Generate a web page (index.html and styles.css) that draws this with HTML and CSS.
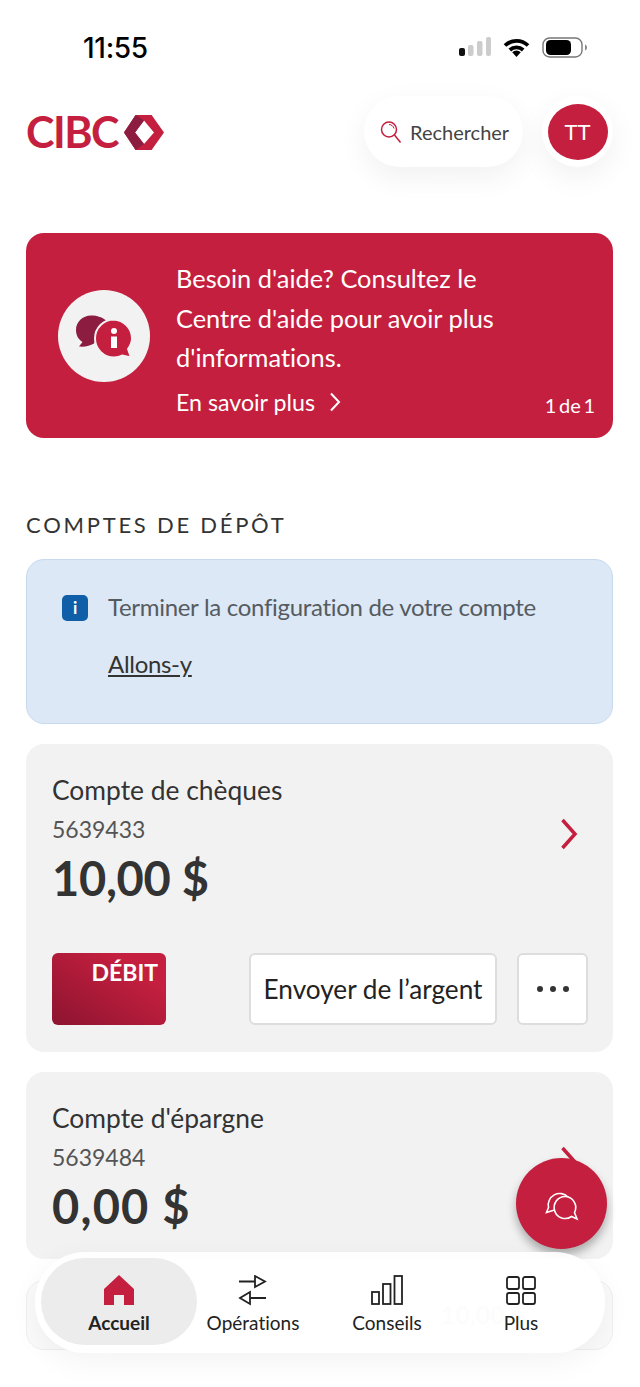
FILE: index.html
```html
<!DOCTYPE html>
<html lang="fr">
<head>
<meta charset="utf-8">
<title>CIBC - Accueil</title>
<link rel="stylesheet" href="styles.css">
</head>
<body>
<div class="screen">
    <!-- barre d'etat -->
    <div class="status">
        <span class="time">11:55</span>
        <div class="statusIcons">
            <svg width="32" height="20" viewBox="0 0 32 20"><rect x="0" y="11" width="6" height="8" rx="2" fill="#111"/><rect x="9" y="8" width="5.500" height="11" rx="2" fill="#ccc"/><rect x="18" y="4" width="5.500" height="15" rx="2" fill="#ccc"/><rect x="27" y="0" width="5" height="19" rx="2" fill="#ccc"/></svg>
            <svg width="27" height="20" viewBox="0 0 27 20"><path d="M2 8.500a16.500 16.500 0 0 1 23 0" fill="none" stroke="#000" stroke-width="3.800"/><path d="M6.800 13a10 10 0 0 1 13.400 0" fill="none" stroke="#000" stroke-width="3.800"/><path d="M13.500 20l-4.300-4.700a6.300 6.300 0 0 1 8.600 0z" fill="#000"/></svg>
            <svg width="45" height="21" viewBox="0 0 45 21"><rect x="1" y="1" width="39" height="19" rx="6.500" fill="none" stroke="#777" stroke-width="1.400"/><rect x="4" y="3" width="25" height="15" rx="4.500" fill="#000"/><path d="M43 7.500c1.300.5 2 1.700 2 3s-.7 2.500-2 3z" fill="#888"/></svg>
        </div>
    </div>

    <!-- entete -->
    <header class="header">
        <div class="logo">
            <span class="logoText">CIBC</span>
            <svg width="40" height="35" viewBox="0 0 40 35"><path d="M0 17.500L11.600 0h16L40 17.500 27.600 35h-16zM20 5.500l-9 12 9 11.500 10-11.500z" fill="#c41f3e" fill-rule="evenodd"/><path d="M0 17.500L11.600 0 20 5.500l-9 12L20 29l-8.400 6z" fill="#8c1d40"/></svg>
        </div>
        <div class="headerRight">
            <div class="search">
                <svg width="22" height="24" viewBox="0 0 22 24"><circle cx="9" cy="9.500" r="7.500" fill="none" stroke="#c41f3e" stroke-width="1.500"/><path d="M14.500 15l6 7.500" fill="none" stroke="#c41f3e" stroke-width="1.500"/><path d="M9 4.500c2.500 0 4.500 1.800 5 4" fill="none" stroke="#c41f3e" stroke-width="1"/></svg>
                <span>Rechercher</span>
            </div>
            <div class="avatarRing"><div class="avatar">TT</div></div>
        </div>
    </header>

    <!-- bandeau aide -->
    <section class="banner">
        <div class="bannerIcon">
            <svg width="92" height="92" viewBox="0 0 92 92"><path d="M33 25.500c-8.500 0-15 6.500-15 14.500 0 5.500 2.500 9.500 6.500 12l-3.500 4.500c6 .5 11-.5 15-3l12-23c-3-3-9-5-15-5z" fill="#8c1d40"/><path d="M56 29.500a19 19 0 0 0-19 19c0 10.500 8.500 19 19 19 3 0 6-.7 8.500-2l8.500 2-3-8.500c2.500-3.300 4-6.300 4-10.500a19 19 0 0 0-18.500-19z" fill="#c41f3e" stroke="#f2f2f2" stroke-width="2"/><circle cx="56" cy="41" r="3" fill="#fff"/><path d="M53 46.500h6V58h-6z" fill="#fff"/></svg>
        </div>
        <div class="bannerBody">
            <p class="bannerText">Besoin d'aide? Consultez le<br>Centre d'aide pour avoir plus<br>d'informations.</p>
            <div class="bannerLink">
                <span>En savoir plus</span>
                <svg width="12" height="20" viewBox="0 0 12 20"><path d="M2 1.500L10 10l-8 8.500" fill="none" stroke="#fff" stroke-width="2"/></svg>
            </div>
        </div>
        <span class="bannerCount">1 de 1</span>
    </section>

    <h2 class="sectionTitle">COMPTES DE DÉPÔT</h2>

    <!-- message configuration -->
    <section class="notice">
        <div class="noticeRow">
            <span class="noticeIcon">i</span>
            <span class="noticeText">Terminer la configuration de votre compte</span>
        </div>
        <a class="noticeLink">Allons-y</a>
    </section>

    <!-- comptes -->
    <section class="card">
        <div class="cardTop">
            <div>
                <div class="cardName">Compte de chèques</div>
                <div class="cardNum">5639433</div>
                <div class="cardAmount">10,00 $</div>
            </div>
            <svg class="chevron" width="20" height="32" viewBox="0 0 20 32"><path d="M3.500 2L16 16 3.500 30" fill="none" stroke="#c41f3e" stroke-width="3.500"/></svg>
        </div>
        <div class="cardActions">
            <div class="debit">DÉBIT</div>
            <div class="btn btnSend">Envoyer de l’argent</div>
            <div class="btn btnMore"><i></i><i></i><i></i></div>
        </div>
    </section>

    <section class="card cardShort">
        <div class="cardTop">
            <div>
                <div class="cardName">Compte d'épargne</div>
                <div class="cardNum">5639484</div>
                <div class="cardAmount amountWide">0,00 $</div>
            </div>
            <svg class="chevron" width="20" height="32" viewBox="0 0 20 32"><path d="M3.500 2L16 16 3.500 30" fill="none" stroke="#c41f3e" stroke-width="3.500"/></svg>
        </div>
    </section>

    <section class="card cardGhost">
        <div class="ghostAmount">10,00 $</div>
    </section>

    <!-- bouton clavardage -->
    <div class="fab">
        <svg width="65" height="65" viewBox="-1.500 .5 65 65"><path d="M37.500 26.500A11.500 11.500 0 0 0 18 37l-2 5 8-2.500" fill="none" stroke="#fff" stroke-width="1.600"/><path d="M35 26a11 11 0 1 0 6 20l5.500 2.500L44 42a11 11 0 0 0-9-16z" fill="#c41f3e" stroke="#fff" stroke-width="1.600"/></svg>
    </div>

    <!-- navigation -->
    <nav class="nav">
        <div class="navItem navActive">
            <svg width="32" height="32" viewBox="0 0 32 32"><path d="M16 0L1 14v16h10V20h10v10h10V14z" fill="#c41f3e"/></svg>
            <span>Accueil</span>
        </div>
        <div class="navItem navFirst">
            <svg width="32" height="32" viewBox="0 0 32 32"><path d="M2 6.500h16M18 1l10 5.500L18 12zM29 23H13M13 17L3 23l10 6z" fill="none" stroke="#222" stroke-width="1.800"/></svg>
            <span>Opérations</span>
        </div>
        <div class="navItem">
            <svg width="32" height="32" viewBox="0 0 32 32"><rect x="1" y="17" width="7" height="12" fill="none" stroke="#222" stroke-width="1.800"/><rect x="12" y="9" width="7.500" height="20" fill="none" stroke="#222" stroke-width="1.800"/><rect x="23.500" y="1" width="7.500" height="28" fill="none" stroke="#222" stroke-width="1.800"/></svg>
            <span>Conseils</span>
        </div>
        <div class="navItem">
            <svg width="32" height="32" viewBox="0 0 32 32"><rect x="2" y="2" width="12" height="12" rx="2" fill="none" stroke="#222" stroke-width="1.800"/><rect x="18" y="2" width="12" height="12" rx="2" fill="none" stroke="#222" stroke-width="1.800"/><rect x="2" y="18" width="12" height="11" rx="2" fill="none" stroke="#222" stroke-width="1.800"/><rect x="18" y="18" width="12" height="11" rx="2" fill="none" stroke="#222" stroke-width="1.800"/></svg>
            <span>Plus</span>
        </div>
    </nav>
</div>
</body>
</html>
```
FILE: styles.css
```css
*{margin: 0; padding: 0; box-sizing: border-box;}
html,body{width:640px; height:1387px; overflow:hidden; background:#fff;}
body{font-family:"Lato","Noto Sans",sans-serif; color:#333; font-variant-ligatures:none;}
.screen{width:640px; height:1387px; position:relative; overflow:hidden; padding:0 27px 0 26px; background:#fff;}

.status{height:96px; display:flex; justify-content:space-between; align-items:flex-start; padding:30px 0 0 57px;}
.time{font-family:"Inter",sans-serif; font-size:28px; font-weight:500; line-height:36px; color:#000; letter-spacing:-.3px;}
.statusIcons{display:flex; align-items:flex-start; gap:12px; margin-right:26px; margin-top:7px;}

.header{height:71px; display:flex; justify-content:space-between; align-items:center;}
.logo{display:flex; align-items:center; width:138px; justify-content:space-between; margin-top:1px;}
.logoText{font-weight:700; font-size:43px; line-height:44px; color:#c41f3e; letter-spacing:-1.500px;}
.headerRight{display:flex; gap:19px;}
.search{width:159px; height:71px; border-radius:36px; background:#fff; display:flex; align-items:center; gap:8px; padding-left:16px; font-size:20px; color:#444; box-shadow:0 10px 30px rgba(0,0,0,.06);}
.avatarRing{width:71px; height:71px; border-radius:50%; background:#fff; display:flex; align-items:center; justify-content:center; box-shadow:0 10px 30px rgba(0,0,0,.06);}
.avatar{width:60px; height:56px; border-radius:50%; background:#c41f3e; color:#fff; font-size:22px; text-align:center; line-height:56px;}

.banner{margin-top:66px; height:205px; border-radius:18px; background:#c41f3e; color:#fff; position:relative; display:flex; padding:26px 0 0 32px; gap:26px;}
.bannerIcon{width:92px; height:92px; border-radius:50%; background:#f2f2f2; margin-top:31px;}
.bannerIcon svg{display:block;}
.bannerText{font-size:25.400px; line-height:39.500px;}
.bannerLink{display:flex; align-items:center; gap:14px; font-size:23.200px; line-height:30px; margin-top:9px;}
.bannerCount{position:absolute; right:18px; bottom:20px; font-size:20px; line-height:26px; word-spacing:-2.500px;}

.sectionTitle{margin-top:73px; font-size:22px; font-weight:400; line-height:28px; letter-spacing:2.750px; color:#333;}

.notice{margin-top:20px; height:165px; border-radius:18px; border:1px solid #c6d9ee; background:#dce8f6; padding:35px 0 0 35px; font-size:24px; color:#555b60; letter-spacing:-.3px;}
.noticeRow{display:flex; align-items:center; gap:20px; line-height:26px;}
.noticeText{margin-top:-2px;}
.noticeIcon{width:26px; height:26px; border-radius:5px; background:#0e5ea8; color:#fff; font-size:17px; font-weight:700; text-align:center; line-height:26px;}
.noticeLink{display:block; margin:29px 0 0 46px; color:#333; text-decoration:underline; line-height:28px;}

.card{margin-top:20px; border-radius:18px; background:#f2f2f2; padding:29px 25px 27px 26px;}
.cardShort{padding-bottom:25px;}
.cardTop{display:flex; justify-content:space-between; align-items:center;}
.chevron{margin-right:9px; margin-top:-11px;}
.cardName{font-size:26.400px; line-height:34px;}
.cardNum{font-size:23px; line-height:30px; color:#555; margin-top:7px;}
.cardAmount{font-size:47px; font-weight:700; line-height:56px; margin-top:6px; letter-spacing:-.3px;}
.amountWide{letter-spacing:1.200px;}
.cardActions{display:flex; align-items:stretch; margin-top:47px; height:72px;}
.debit{width:114px; border-radius:6px; background:linear-gradient(35deg,#8c1430,#c41f3e 75%); color:#fff; font-size:23px; font-weight:700; text-align:right; padding:6px 8px 0 0; line-height:26px;}
.btn{background:#fff; border:2px solid #ddd; border-radius:6px; display:flex; align-items:center; justify-content:center;}
.btnSend{width:248px; margin-left:83px; font-size:26.200px; color:#222;}
.btnMore{width:71px; margin-left:20px; gap:7px;}
.btnMore i{width:6px; height:6px; border-radius:50%; background:#333;}

.cardGhost{height:70px; margin-top:21px; background:#fafafa; border:1px solid #efefef; position:relative;}
.ghostAmount{position:absolute; left:414px; top:18px; font-size:25px; font-weight:700; color:#d4d4d4;}

.fab{position:absolute; left:516px; top:1158px; width:91px; height:91px; border-radius:50%; background:#c41f3e; display:flex; align-items:center; justify-content:center; box-shadow:0 6px 10px rgba(0,0,0,.3);}

.nav{position:absolute; left:35px; top:1252px; width:570px; height:101px; border-radius:50px; background:rgba(255,255,255,.92); display:flex; padding:6px 6px 8px; box-shadow:0 8px 30px rgba(0,0,0,.05);}
.navItem{flex:0 0 134px; display:flex; flex-direction:column; align-items:center; padding-top:17px; gap:4px; font-size:19px; line-height:24px; color:#222;}
.navActive{flex:0 0 156px; background:#ececec; border-radius:44px; font-weight:700;}
.navFirst{margin-left:-11px;}
```
